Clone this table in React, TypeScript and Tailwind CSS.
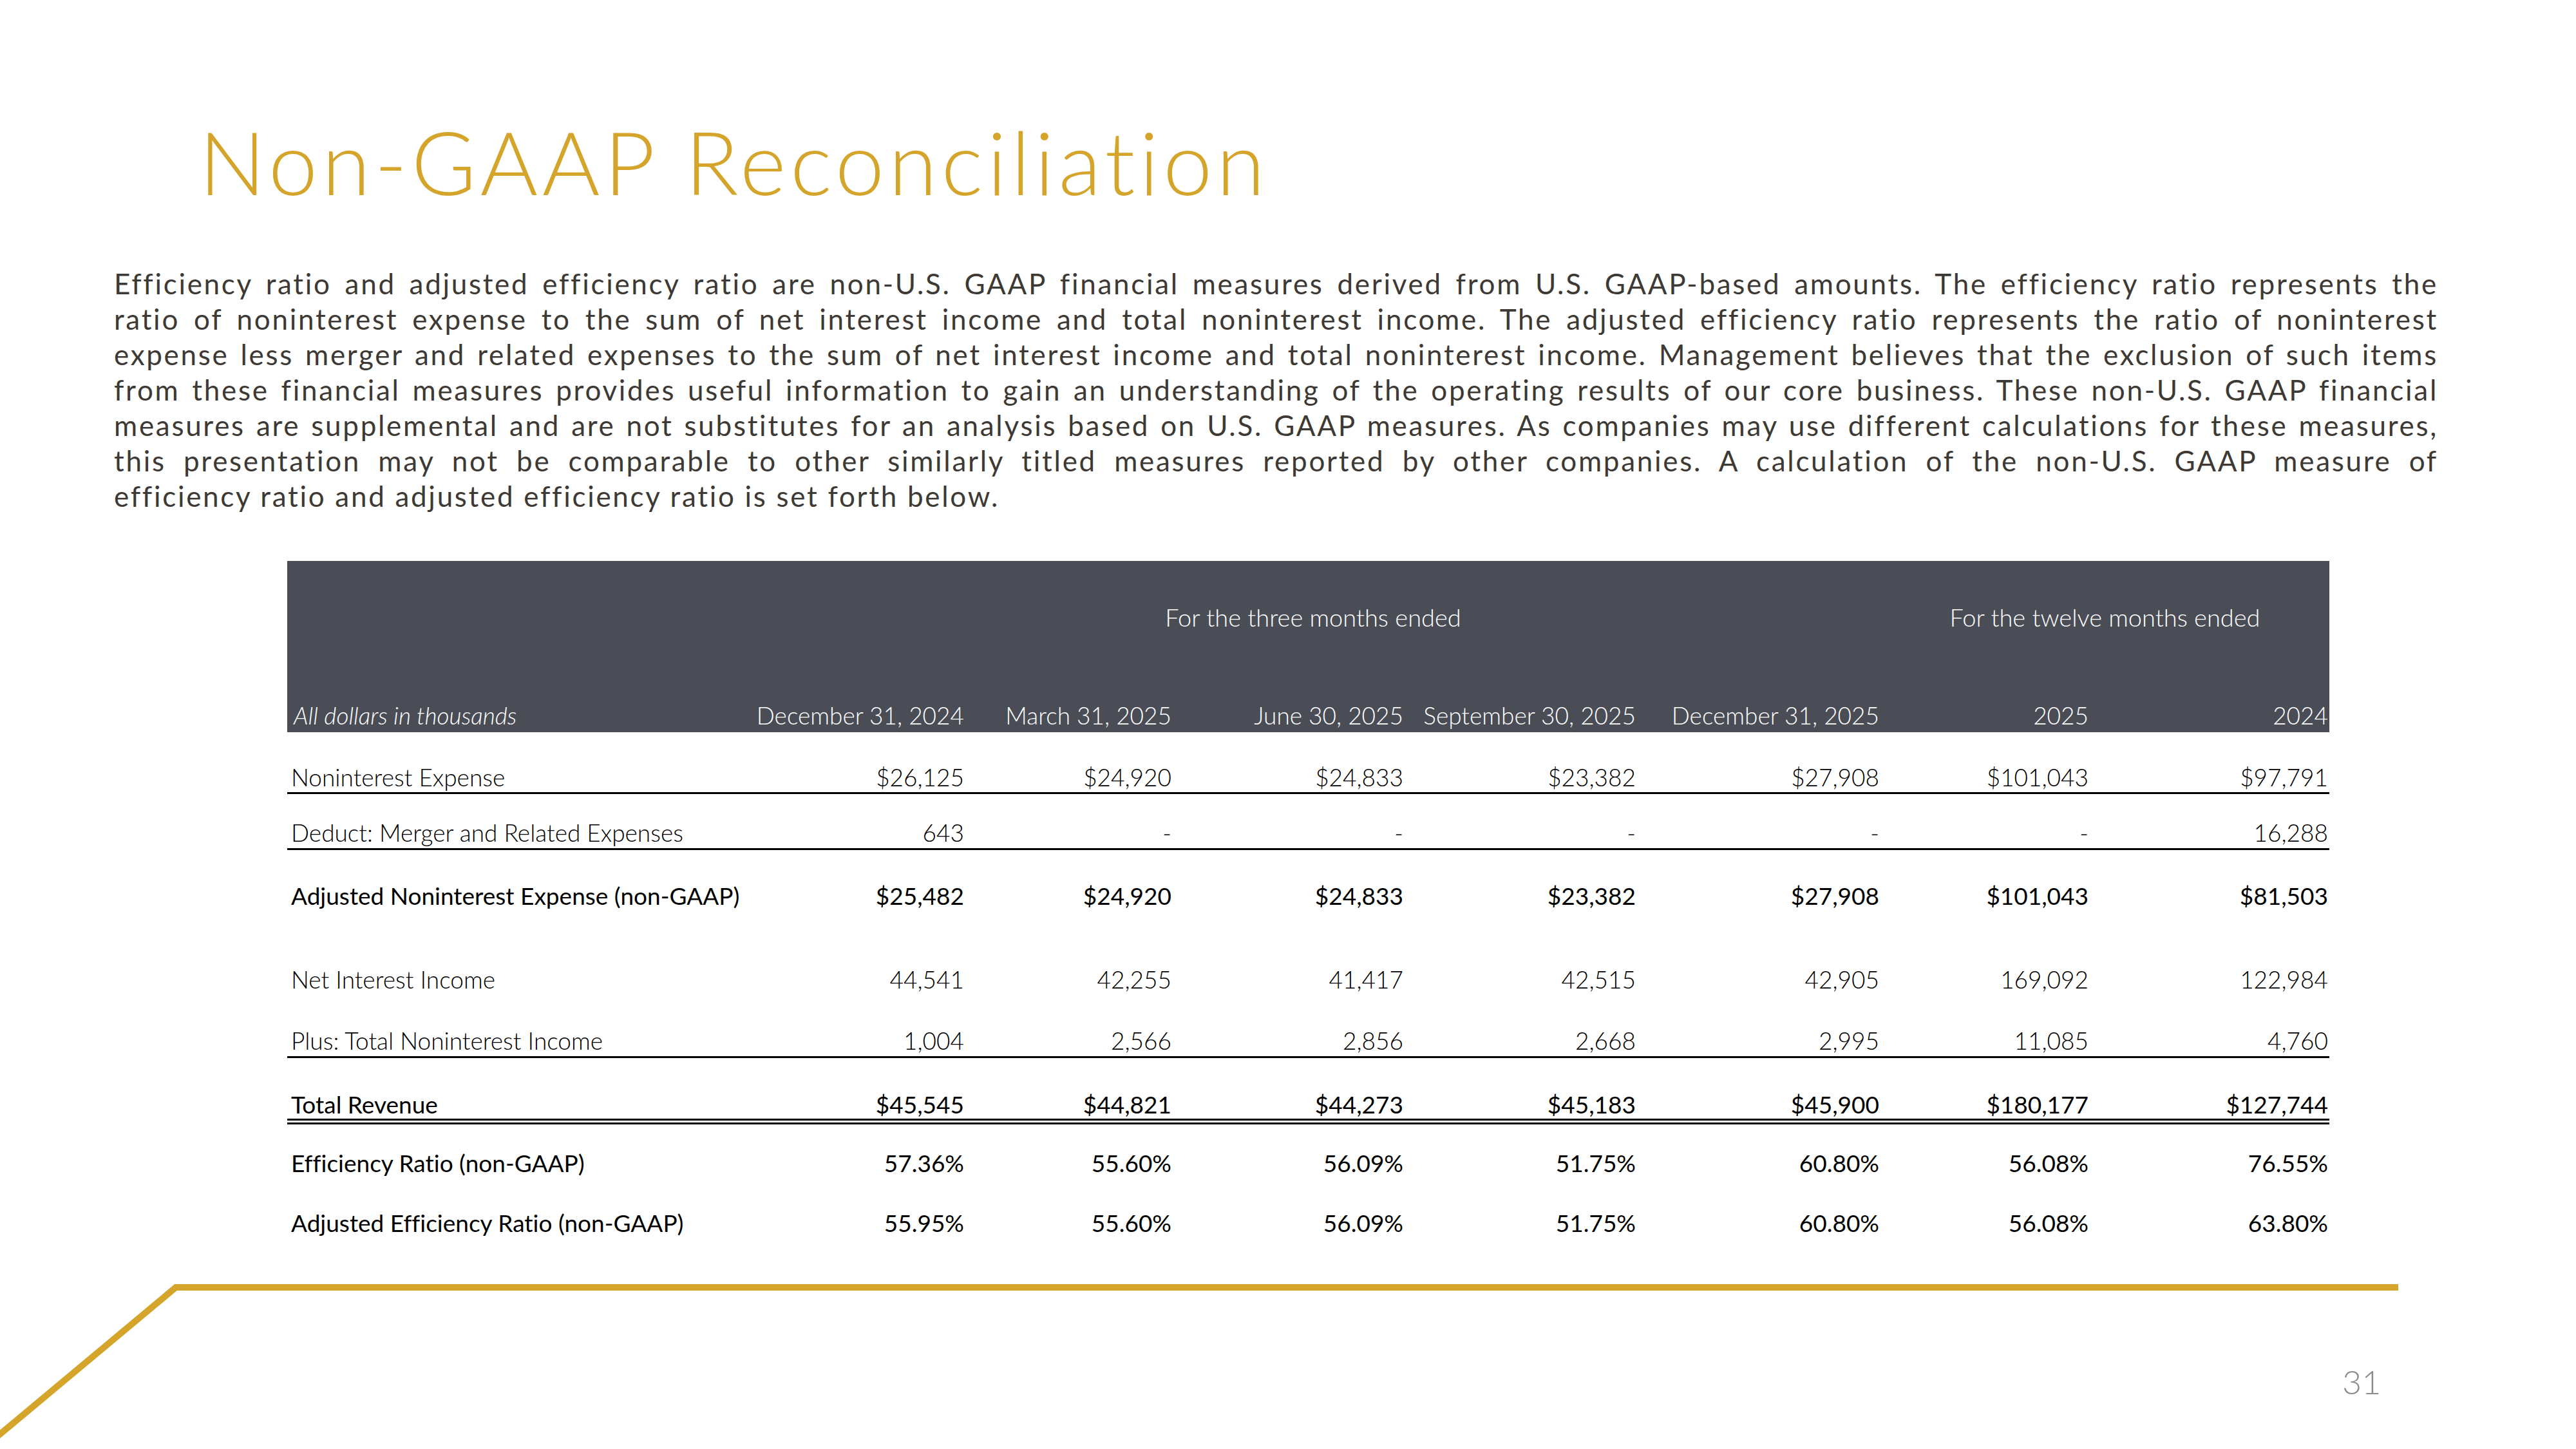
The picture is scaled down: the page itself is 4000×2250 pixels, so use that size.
import React from "react";

const lines = [
  "Efficiency ratio and adjusted efficiency ratio are non-U.S. GAAP financial measures derived from U.S. GAAP-based amounts. The efficiency ratio represents the",
  "ratio of noninterest expense to the sum of net interest income and total noninterest income. The adjusted efficiency ratio represents the ratio of noninterest",
  "expense less merger and related expenses to the sum of net interest income and total noninterest income. Management believes that the exclusion of such items",
  "from these financial measures provides useful information to gain an understanding of the operating results of our core business. These non-U.S. GAAP financial",
  "measures are supplemental and are not substitutes for an analysis based on U.S. GAAP measures. As companies may use different calculations for these measures,",
  "this presentation may not be comparable to other similarly titled measures reported by other companies. A calculation of the non-U.S. GAAP measure of",
];

const rows = [
  {
    label: "Noninterest Expense",
    vals: ["$26,125", "$24,920", "$24,833", "$23,382", "$27,908", "$101,043", "$97,791"],
    cls: "pt-[51px] pb-[5px] border-b-[3px] border-black font-light",
  },
  {
    label: "Deduct: Merger and Related Expenses",
    vals: ["643", "-", "-", "-", "-", "-", "16,288"],
    cls: "pt-[41px] pb-[6px] border-b-[3px] border-black font-light",
  },
  {
    label: "Adjusted Noninterest Expense (non-GAAP)",
    vals: ["$25,482", "$24,920", "$24,833", "$23,382", "$27,908", "$101,043", "$81,503"],
    cls: "pt-[52px] font-normal",
  },
  {
    label: "Net Interest Income",
    vals: ["44,541", "42,255", "41,417", "42,515", "42,905", "169,092", "122,984"],
    cls: "pt-[93px] font-light",
  },
  {
    label: "Plus: Total Noninterest Income",
    vals: ["1,004", "2,566", "2,856", "2,668", "2,995", "11,085", "4,760"],
    cls: "pt-[58px] pb-[6px] border-b-[3px] border-black font-light",
  },
  {
    label: "Total Revenue",
    vals: ["$45,545", "$44,821", "$44,273", "$45,183", "$45,900", "$180,177", "$127,744"],
    cls: "pt-[53px] pb-[4px] border-b-[9px] border-double border-black font-normal",
  },
  {
    label: "Efficiency Ratio (non-GAAP)",
    vals: ["57.36%", "55.60%", "56.09%", "51.75%", "60.80%", "56.08%", "76.55%"],
    cls: "pt-[41px] font-normal",
  },
  {
    label: "Adjusted Efficiency Ratio (non-GAAP)",
    vals: ["55.95%", "55.60%", "56.09%", "51.75%", "60.80%", "56.08%", "63.80%"],
    cls: "pt-[56px] font-normal",
  },
];

const heads = [
  "December 31, 2024",
  "March 31, 2025",
  "June 30, 2025",
  "September 30, 2025",
  "December 31, 2025",
  "2025",
  "2024",
];

export default function App() {
  return (
    <div className="w-[4000px] h-[2250px] bg-white overflow-hidden flex flex-col font-['Lato',sans-serif] [font-variant-ligatures:none]">
      <h1 className="mt-[182px] pl-[309px] text-[137px] leading-none tracking-[6.5px] text-[#D4A52A] font-light font-['Lato',sans-serif]">
        Non-GAAP Reconciliation
      </h1>

      <div className="mt-[94px] ml-[177px] w-[3609px] text-[44px] leading-[55px] tracking-[2.7px] text-[#3d3935]">
        {lines.map((l, i) => (
          <div key={i} className="text-justify [text-align-last:justify]">
            {l}
          </div>
        ))}
        <div>efficiency ratio and adjusted efficiency ratio is set forth below.</div>
      </div>

      <div className="mt-[73px] ml-[446px] w-[3171px] text-[37px] leading-none text-black">
        <div className="bg-[#4A4D56] text-white font-light pt-[68px] pb-[8px]">
          <div className="grid grid-cols-[712px_341px_322px_360px_361px_378px_325px_372px] text-[38px]">
            <div />
            <div className="col-span-5 text-center">For the three months ended</div>
            <div className="col-span-2 text-center">For the twelve months ended</div>
          </div>
          <div className="mt-[115px] grid grid-cols-[712px_341px_322px_360px_361px_378px_325px_372px]">
            <div className="pl-[10px] italic">All dollars in thousands</div>
            {heads.map((h, i) => (
              <div key={i} className="text-right pr-[2px] whitespace-nowrap">
                {h}
              </div>
            ))}
          </div>
        </div>

        {rows.map((r, i) => (
          <div
            key={i}
            className={`grid grid-cols-[712px_341px_322px_360px_361px_378px_325px_372px] ${r.cls}`}
          >
            <div className="pl-[6px] whitespace-nowrap">{r.label}</div>
            {r.vals.map((v, j) => (
              <div key={j} className="text-right pr-[2px] whitespace-nowrap">
                {v}
              </div>
            ))}
          </div>
        ))}
      </div>

      <div className="mt-[73px] grid">
        <svg
          className="col-start-1 row-start-1"
          width="4000"
          height="260"
          viewBox="0 0 4000 260"
        >
          <polyline
            points="-6,242 273,9 3724,9"
            fill="none"
            stroke="#D4A52A"
            strokeWidth="10"
            strokeLinejoin="miter"
          />
        </svg>
        <div className="col-start-1 row-start-1 pt-[129px] pl-[3637px] text-[52px] leading-none font-light text-[#8c8c8c]">
          31
        </div>
      </div>
    </div>
  );
}
